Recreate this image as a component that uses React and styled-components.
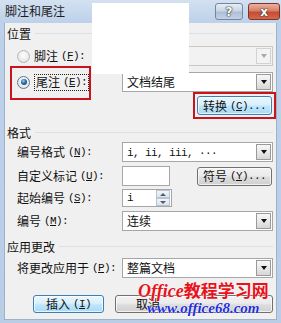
import React from 'react';
import styled, { createGlobalStyle } from 'styled-components';

const Global = createGlobalStyle`
  html, body { margin: 0; padding: 0; background: #bfd1e8; }
  body { font-family: "Noto Sans CJK SC", sans-serif; }
  #root { width: 281px; height: 323px; }
`;

const Window = styled.div`
  position: relative;
  width: 281px;
  height: 323px;
  overflow: hidden;
  display: flex;
  flex-direction: column;
  background: linear-gradient(180deg, #d3e1f1 0px, #bed1ea 22px, #b9cde6 100%);
`;

const TitleBar = styled.div`
  height: 23px;
  flex-shrink: 0;
  display: flex;
  align-items: flex-start;
  padding: 0 1px 0 5px;
  box-sizing: border-box;
`;

const Title = styled.div`
  flex: 1;
  font-size: 12px;
  line-height: 14px;
  margin-top: 4px;
  color: #1b1b1b;
`;

const CapBtn = styled.div`
  margin-top: 3px;
  height: 17px;
  width: ${p => p.$w}px;
  margin-left: ${p => p.$ml || 0}px;
  box-sizing: border-box;
  border: 1px solid ${p => (p.$close ? '#7b3326' : '#74869f')};
  border-radius: 3px;
  display: flex;
  align-items: center;
  justify-content: center;
  background: ${p =>
    p.$close
      ? 'linear-gradient(180deg, #eab1a3 0%, #d98067 45%, #c74b32 55%, #d3694c 100%)'
      : 'linear-gradient(180deg, #e6edf6 0%, #c9d6e7 45%, #aebfd6 55%, #c3d2e5 100%)'};
  color: #fff;
  font: bold 12px "DejaVu Sans", sans-serif;
  text-shadow: 0 0 1px #333, 0 0 1px #333, 0 0 2px #444;
`;

const Body = styled.div`
  flex: 1;
  margin: 0 4px 3px 4px;
  background: #f0f0f0;
  border: 1px solid #9fb1c9;
  border-top: none;
  padding: 0 3px 0 2px;
  display: flex;
  flex-direction: column;
`;

const Header = styled.div`
  height: 20px;
  margin-top: ${p => p.$mt || 0}px;
  display: flex;
  align-items: center;
  font-size: 12px;
  color: #111;
  &::after {
    content: '';
    flex: 1;
    height: 1px;
    margin-left: 4px;
    background: #d9e1e8;
  }
`;

const Row = styled.div`
  display: grid;
  grid-template-columns: 105px 1fr;
  align-items: center;
  height: ${p => p.$h || 20}px;
  margin-top: ${p => p.$mt || 0}px;
  padding-left: 10px;
  font-size: 12px;
  color: #111;
`;

const Label = styled.div`
  display: flex;
  align-items: center;
  white-space: nowrap;
  line-height: 16px;
`;

const Mn = styled.span`
  font-family: "Liberation Mono", monospace;
  font-size: 11px;
  letter-spacing: -0.6px;
  margin-left: ${p => (p.$flush ? 0 : 3)}px;
  u { text-decoration: underline; text-underline-offset: 1px; }
`;

const Radio = styled.span`
  width: 11px;
  height: 11px;
  border-radius: 50%;
  border: 1px solid ${p => (p.$on ? '#5a7a9a' : '#b5b5b5')};
  background: radial-gradient(circle at 50% 40%, #ffffff 0%, #e6e6e6 70%, #d4d4d4 100%);
  margin-right: 4px;
  display: flex;
  align-items: center;
  justify-content: center;
  flex-shrink: 0;
  &::after {
    content: '';
    display: ${p => (p.$on ? 'block' : 'none')};
    width: 6px;
    height: 6px;
    border-radius: 50%;
    background: radial-gradient(circle at 40% 35%, #9fd0f2 0%, #2b6aa6 45%, #0f3157 100%);
  }
`;

const Focus = styled.span`
  display: flex;
  align-items: center;
  height: 15px;
  padding: 0 1px;
  border: 1px dotted #222;
`;

const Combo = styled.div`
  height: 20px;
  box-sizing: border-box;
  border: 1px solid ${p => (p.$disabled ? '#c9c9c9' : '#a6a6a6')};
  background: ${p => (p.$disabled ? '#f2f2f2' : '#fff')};
  display: flex;
  align-items: center;
  padding-left: 4px;
  font-size: 12px;
  color: #111;
`;

const ComboText = styled.div`
  flex: 1;
  line-height: 16px;
  white-space: nowrap;
`;

const DropBtn = styled.div`
  width: 15px;
  height: 16px;
  margin-right: 1px;
  box-sizing: border-box;
  border: 1px solid ${p => (p.$disabled ? '#d2d2d2' : '#9a9a9a')};
  background: ${p =>
    p.$disabled
      ? '#f3f3f3'
      : 'linear-gradient(180deg, #f7f7f7 0%, #e9e9e9 50%, #d6d6d6 100%)'};
  display: flex;
  align-items: center;
  justify-content: center;
  &::after {
    content: '';
    border-left: 3.5px solid transparent;
    border-right: 3.5px solid transparent;
    border-top: 4px solid ${p => (p.$disabled ? '#a8a8a8' : '#111')};
  }
`;

const TextBox = styled.div`
  width: ${p => p.$w}px;
  height: ${p => p.$h || 20}px;
  box-sizing: border-box;
  border: 1px solid #a6a6a6;
  background: #fff;
  display: flex;
  align-items: center;
  padding-left: 4px;
`;

const Control = styled.div`
  display: flex;
  align-items: center;
`;

const SpinCol = styled.div`
  margin-left: auto;
  width: 14px;
  height: 16px;
  display: flex;
  flex-direction: column;
  margin-right: 1px;
`;

const SpinBtn = styled.div`
  flex: 1;
  box-sizing: border-box;
  border: 1px solid #b8c4d2;
  background: linear-gradient(180deg, #f2f5f9, #dbe3ec);
  display: flex;
  align-items: center;
  justify-content: center;
  &::after {
    content: '';
    border-left: 3px solid transparent;
    border-right: 3px solid transparent;
    ${p => (p.$up ? 'border-bottom: 3px solid #4e5d70;' : 'border-top: 3px solid #4e5d70;')}
  }
`;

const Button = styled.div`
  width: ${p => p.$w}px;
  height: ${p => p.$h || 19}px;
  margin-left: ${p => p.$ml || 0}px;
  margin-right: ${p => p.$mr || 0}px;
  box-sizing: border-box;
  border: 1px solid ${p => (p.$blue ? '#3c7fb1' : '#707070')};
  border-radius: 3px;
  background: ${p =>
    p.$blue
      ? 'linear-gradient(180deg, #eaf6fd 0%, #d9f0fc 45%, #bee6fd 55%, #a7d9f5 100%)'
      : 'linear-gradient(180deg, #f2f2f2 0%, #ebebeb 45%, #dddddd 55%, #cfcfcf 100%)'};
  box-shadow: inset 0 0 0 1px rgba(255, 255, 255, 0.7);
  display: flex;
  align-items: center;
  justify-content: ${p => p.$justify || 'center'};
  padding-left: ${p => p.$pl || 0}px;
  font-size: 12px;
  line-height: 14px;
  color: #111;
  white-space: nowrap;
`;

const ActionRow = styled.div`
  display: flex;
  align-items: flex-end;
  justify-content: ${p => p.$justify || 'flex-start'};
  height: ${p => p.$h}px;
  margin-top: ${p => p.$mt || 0}px;
  padding-left: ${p => p.$pl || 0}px;
`;

const Cover = styled.div`
  position: absolute;
  left: 92px;
  top: 3px;
  width: 97px;
  height: 71px;
  background: #ffffff;
`;

const Mark = styled.div`
  position: absolute;
  left: ${p => p.$x}px;
  top: ${p => p.$y}px;
  width: ${p => p.$w}px;
  height: ${p => p.$h}px;
  box-sizing: border-box;
  border: 2px solid #c9141e;
  pointer-events: none;
`;

const Watermark = styled.div`
  position: absolute;
  left: 138px;
  top: 281px;
  display: flex;
  flex-direction: column;
  pointer-events: none;
`;

const WmTop = styled.div`
  color: #e8121a;
  font-size: 17px;
  line-height: 17px;
  font-weight: bold;
  white-space: nowrap;
  text-shadow: 0 0 1px #fff, 0 0 1px #fff;
  span {
    font-family: "Liberation Serif", serif;
    font-style: italic;
    font-size: 18px;
  }
`;

const WmBottom = styled.div`
  color: #1f2fd6;
  font-family: "Liberation Serif", serif;
  font-style: italic;
  font-weight: bold;
  font-size: 15px;
  line-height: 15px;
  margin-left: 9px;
  margin-top: 1px;
  white-space: nowrap;
  text-shadow: 0 0 1px #fff, 0 0 1px #fff;
`;

const M = ({ k }) => (
  <Mn>
    (<u>{k}</u>):
  </Mn>
);

export default function App() {
  return (
    <>
      <Global />
      <Window>
        <TitleBar>
          <Title>脚注和尾注</Title>
          <CapBtn $w={28}>?</CapBtn>
          <CapBtn $w={32} $ml={5} $close>
            x
          </CapBtn>
        </TitleBar>
        <Body>
          <Header>位置</Header>
          <Row $mt={3}>
            <Label>
              <Radio />
              脚注<M k="F" />
            </Label>
            <Combo $disabled>
              <ComboText />
              <DropBtn $disabled />
            </Combo>
          </Row>
          <Row $mt={6}>
            <Label>
              <Radio $on />
              <Focus>
                尾注<M k="E" />
              </Focus>
            </Label>
            <Combo>
              <ComboText>文档结尾</ComboText>
              <DropBtn />
            </Combo>
          </Row>
          <ActionRow $h={23} $justify="flex-end">
            <Button $w={75} $mr={1} $blue>
              转换<Mn>(<u>C</u>)...</Mn>
            </Button>
          </ActionRow>

          <Header $mt={7}>格式</Header>
          <Row>
            <Label>
              编号格式<M k="N" />
            </Label>
            <Combo>
              <ComboText>
                <Mn $flush>i, ii, iii, ···</Mn>
              </ComboText>
              <DropBtn />
            </Combo>
          </Row>
          <Row $mt={4}>
            <Label>
              自定义标记<M k="U" />
            </Label>
            <Control>
              <TextBox $w={48} />
              <Button $w={75} $ml={27}>
                符号<Mn>(<u>Y</u>)...</Mn>
              </Button>
            </Control>
          </Row>
          <Row $mt={3} $h={18}>
            <Label>
              起始编号<M k="S" />
            </Label>
            <Control>
              <TextBox $w={50} $h={18}>
                <Mn $flush>i</Mn>
                <SpinCol>
                  <SpinBtn $up />
                  <SpinBtn />
                </SpinCol>
              </TextBox>
            </Control>
          </Row>
          <Row $mt={4}>
            <Label>
              编号<M k="M" />
            </Label>
            <Combo>
              <ComboText>连续</ComboText>
              <DropBtn />
            </Combo>
          </Row>

          <Header $mt={5}>应用更改</Header>
          <Row $mt={2}>
            <Label>
              将更改应用于<M k="P" />
            </Label>
            <Combo>
              <ComboText>整篇文档</ComboText>
              <DropBtn />
            </Combo>
          </Row>

          <ActionRow $h={18} $mt={17} $pl={26}>
            <Button $w={71} $h={18} $blue>
              插入<Mn>(<u>I</u>)</Mn>
            </Button>
            <Button $w={158} $h={18} $ml={11} $justify="flex-start" $pl={20}>
              取消
            </Button>
          </ActionRow>
        </Body>

        <Cover />
        <Mark $x={10} $y={66} $w={81} $h={34} />
        <Mark $x={193} $y={92} $w={83} $h={27} />
        <Watermark>
          <WmTop>
            <span>Office</span>教程学习网
          </WmTop>
          <WmBottom>www.office68.com</WmBottom>
        </Watermark>
      </Window>
    </>
  );
}
